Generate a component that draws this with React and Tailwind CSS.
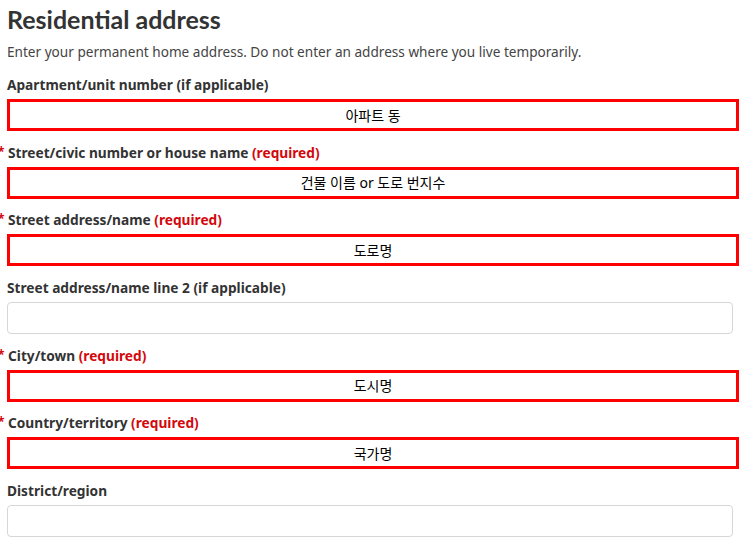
import React from 'react';

const fields = [
  { label: 'Apartment/unit number (if applicable)', value: '아파트 동' },
  { label: 'Street/civic number or house name', required: true, value: '건물 이름 or 도로 번지수' },
  { label: 'Street address/name', required: true, value: '도로명' },
  { label: 'Street address/name line 2 (if applicable)' },
  { label: 'City/town', required: true, value: '도시명' },
  { label: 'Country/territory', required: true, value: '국가명' },
  { label: 'District/region' },
];

const Field = ({ label, required, value }) => (
  <div className="flex flex-col">
    <label className={`relative h-[20px] text-[13.7px] font-bold leading-[21px] text-[#333] ${required ? 'pl-[1px]' : ''}`}>
      {required && (
        <span className="absolute left-[-9px] top-[-1px] text-[12px] text-[#d3080c]">*</span>
      )}
      {label}
      {required && <span className="text-[#d3080c]"> (required)</span>}
    </label>
    {value ? (
      <div className="mt-[5px] flex h-[32px] w-[732px] items-center justify-center border-[3px] border-[#ff0000] bg-white text-[14px] text-black">
        {value}
      </div>
    ) : (
      <div className="mt-[5px] h-[32px] w-[726px] rounded-[4px] border border-[#d6d6d6] bg-white" />
    )}
  </div>
);

export default function App() {
  return (
    <div
      className="h-[540px] overflow-hidden bg-white px-[7px] pt-[2px] text-[#333]"
      style={{ fontFamily: '"Noto Sans", "Noto Sans CJK KR", sans-serif' }}
    >
      <h1
        className="text-[25px] font-bold leading-[34px] text-[#333]"
        style={{ fontFamily: 'Lato, "Noto Sans", sans-serif' }}
      >
        Residential address
      </h1>
      <p className="mt-[6px] text-[13.6px] leading-[20px] text-[#444]">
        Enter your permanent home address. Do not enter an address where you live temporarily.
      </p>
      <div className="mt-[12px] flex flex-col gap-[10.7px]">
        {fields.map((f) => (
          <Field key={f.label} {...f} />
        ))}
      </div>
    </div>
  );
}
